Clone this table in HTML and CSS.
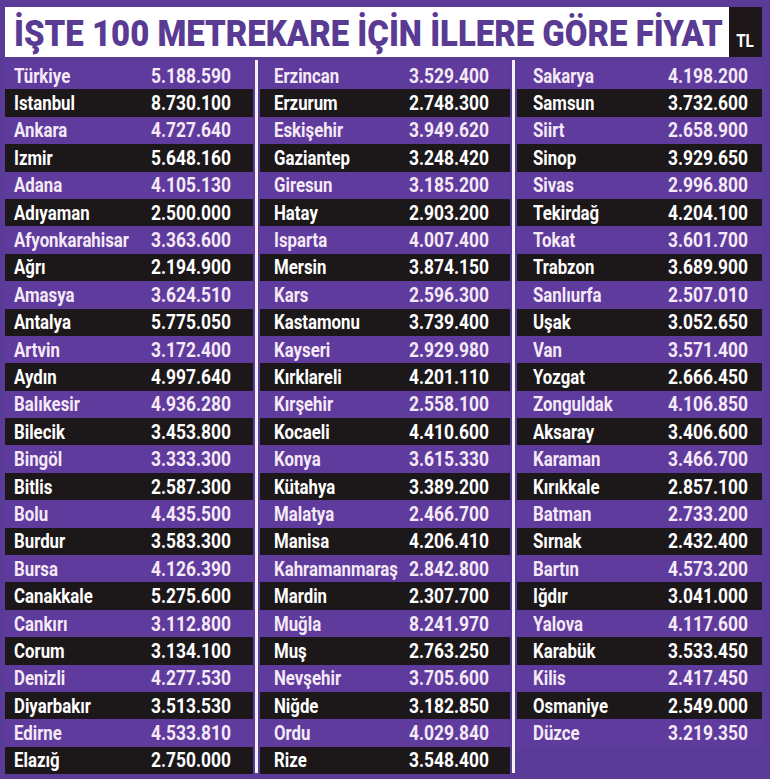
FILE: index.html
```html
<!DOCTYPE html>
<html lang="tr">
<head>
<meta charset="utf-8">
<title>İşte 100 metrekare için illere göre fiyat</title>
<link rel="stylesheet" href="styles.css">
</head>
<body>
<div class="page">
  <div class="header">
    <div class="title"><span class="title-text">İŞTE 100 METREKARE İÇİN İLLERE GÖRE FİYAT</span></div>
    <div class="tl"><span>TL</span></div>
  </div>
  <div class="table">
    <div class="col col1">
      <div class="row"><span class="name">Türkiye</span><span class="num">5.188.590</span></div>
      <div class="row"><span class="name">Istanbul</span><span class="num">8.730.100</span></div>
      <div class="row"><span class="name">Ankara</span><span class="num">4.727.640</span></div>
      <div class="row"><span class="name">Izmir</span><span class="num">5.648.160</span></div>
      <div class="row"><span class="name">Adana</span><span class="num">4.105.130</span></div>
      <div class="row"><span class="name">Adıyaman</span><span class="num">2.500.000</span></div>
      <div class="row"><span class="name">Afyonkarahisar</span><span class="num">3.363.600</span></div>
      <div class="row"><span class="name">Ağrı</span><span class="num">2.194.900</span></div>
      <div class="row"><span class="name">Amasya</span><span class="num">3.624.510</span></div>
      <div class="row"><span class="name">Antalya</span><span class="num">5.775.050</span></div>
      <div class="row"><span class="name">Artvin</span><span class="num">3.172.400</span></div>
      <div class="row"><span class="name">Aydın</span><span class="num">4.997.640</span></div>
      <div class="row"><span class="name">Balıkesir</span><span class="num">4.936.280</span></div>
      <div class="row"><span class="name">Bilecik</span><span class="num">3.453.800</span></div>
      <div class="row"><span class="name">Bingöl</span><span class="num">3.333.300</span></div>
      <div class="row"><span class="name">Bitlis</span><span class="num">2.587.300</span></div>
      <div class="row"><span class="name">Bolu</span><span class="num">4.435.500</span></div>
      <div class="row"><span class="name">Burdur</span><span class="num">3.583.300</span></div>
      <div class="row"><span class="name">Bursa</span><span class="num">4.126.390</span></div>
      <div class="row"><span class="name">Canakkale</span><span class="num">5.275.600</span></div>
      <div class="row"><span class="name">Cankırı</span><span class="num">3.112.800</span></div>
      <div class="row"><span class="name">Corum</span><span class="num">3.134.100</span></div>
      <div class="row"><span class="name">Denizli</span><span class="num">4.277.530</span></div>
      <div class="row"><span class="name">Diyarbakır</span><span class="num">3.513.530</span></div>
      <div class="row"><span class="name">Edirne</span><span class="num">4.533.810</span></div>
      <div class="row"><span class="name">Elazığ</span><span class="num">2.750.000</span></div>
    </div>
    <div class="sep"></div>
    <div class="col col2">
      <div class="row"><span class="name">Erzincan</span><span class="num">3.529.400</span></div>
      <div class="row"><span class="name">Erzurum</span><span class="num">2.748.300</span></div>
      <div class="row"><span class="name">Eskişehir</span><span class="num">3.949.620</span></div>
      <div class="row"><span class="name">Gaziantep</span><span class="num">3.248.420</span></div>
      <div class="row"><span class="name">Giresun</span><span class="num">3.185.200</span></div>
      <div class="row"><span class="name">Hatay</span><span class="num">2.903.200</span></div>
      <div class="row"><span class="name">Isparta</span><span class="num">4.007.400</span></div>
      <div class="row"><span class="name">Mersin</span><span class="num">3.874.150</span></div>
      <div class="row"><span class="name">Kars</span><span class="num">2.596.300</span></div>
      <div class="row"><span class="name">Kastamonu</span><span class="num">3.739.400</span></div>
      <div class="row"><span class="name">Kayseri</span><span class="num">2.929.980</span></div>
      <div class="row"><span class="name">Kırklareli</span><span class="num">4.201.110</span></div>
      <div class="row"><span class="name">Kırşehir</span><span class="num">2.558.100</span></div>
      <div class="row"><span class="name">Kocaeli</span><span class="num">4.410.600</span></div>
      <div class="row"><span class="name">Konya</span><span class="num">3.615.330</span></div>
      <div class="row"><span class="name">Kütahya</span><span class="num">3.389.200</span></div>
      <div class="row"><span class="name">Malatya</span><span class="num">2.466.700</span></div>
      <div class="row"><span class="name">Manisa</span><span class="num">4.206.410</span></div>
      <div class="row"><span class="name">Kahramanmaraş</span><span class="num">2.842.800</span></div>
      <div class="row"><span class="name">Mardin</span><span class="num">2.307.700</span></div>
      <div class="row"><span class="name">Muğla</span><span class="num">8.241.970</span></div>
      <div class="row"><span class="name">Muş</span><span class="num">2.763.250</span></div>
      <div class="row"><span class="name">Nevşehir</span><span class="num">3.705.600</span></div>
      <div class="row"><span class="name">Niğde</span><span class="num">3.182.850</span></div>
      <div class="row"><span class="name">Ordu</span><span class="num">4.029.840</span></div>
      <div class="row"><span class="name">Rize</span><span class="num">3.548.400</span></div>
    </div>
    <div class="sep"></div>
    <div class="col col3">
      <div class="row"><span class="name">Sakarya</span><span class="num">4.198.200</span></div>
      <div class="row"><span class="name">Samsun</span><span class="num">3.732.600</span></div>
      <div class="row"><span class="name">Siirt</span><span class="num">2.658.900</span></div>
      <div class="row"><span class="name">Sinop</span><span class="num">3.929.650</span></div>
      <div class="row"><span class="name">Sivas</span><span class="num">2.996.800</span></div>
      <div class="row"><span class="name">Tekirdağ</span><span class="num">4.204.100</span></div>
      <div class="row"><span class="name">Tokat</span><span class="num">3.601.700</span></div>
      <div class="row"><span class="name">Trabzon</span><span class="num">3.689.900</span></div>
      <div class="row"><span class="name">Sanlıurfa</span><span class="num">2.507.010</span></div>
      <div class="row"><span class="name">Uşak</span><span class="num">3.052.650</span></div>
      <div class="row"><span class="name">Van</span><span class="num">3.571.400</span></div>
      <div class="row"><span class="name">Yozgat</span><span class="num">2.666.450</span></div>
      <div class="row"><span class="name">Zonguldak</span><span class="num">4.106.850</span></div>
      <div class="row"><span class="name">Aksaray</span><span class="num">3.406.600</span></div>
      <div class="row"><span class="name">Karaman</span><span class="num">3.466.700</span></div>
      <div class="row"><span class="name">Kırıkkale</span><span class="num">2.857.100</span></div>
      <div class="row"><span class="name">Batman</span><span class="num">2.733.200</span></div>
      <div class="row"><span class="name">Sırnak</span><span class="num">2.432.400</span></div>
      <div class="row"><span class="name">Bartın</span><span class="num">4.573.200</span></div>
      <div class="row"><span class="name">Iğdır</span><span class="num">3.041.000</span></div>
      <div class="row"><span class="name">Yalova</span><span class="num">4.117.600</span></div>
      <div class="row"><span class="name">Karabük</span><span class="num">3.533.450</span></div>
      <div class="row"><span class="name">Kilis</span><span class="num">2.417.450</span></div>
      <div class="row"><span class="name">Osmaniye</span><span class="num">2.549.000</span></div>
      <div class="row"><span class="name">Düzce</span><span class="num">3.219.350</span></div>
    </div>
  </div>
</div>
</body>
</html>
```
FILE: styles.css
```css
html, body {
  margin: 0;
  padding: 0;
  background: #5b3b98;
}
body {
  width: 770px;
  height: 779px;
  overflow: hidden;
  font-family: Roboto, "Liberation Sans", sans-serif;
}
.page {
  padding: 7px 8px 0 5px;
}
.header {
  display: flex;
  height: 50px;
}
.title {
  flex: 1;
  background: #ffffff;
  display: flex;
  align-items: center;
  overflow: hidden;
  padding-left: 9px;
}
.title-text {
  display: inline-block;
  white-space: nowrap;
  font-weight: 900;
  font-size: 37px;
  color: #5a3b94;
  transform: scaleX(0.89);
  transform-origin: left center;
  margin-top: 2px;
}
.tl {
  width: 33px;
  background: #1d1719;
  display: flex;
  align-items: flex-end;
  justify-content: center;
  padding-bottom: 5px;
  box-sizing: border-box;
}
.tl span {
  display: inline-block;
  color: #ffffff;
  font-weight: 700;
  font-size: 19px;
  transform: scaleX(0.8);
}
.table {
  display: grid;
  grid-template-columns: 248px 3px 250px 3px 245px;
  column-gap: 2px;
  margin-top: 5px;
}
.sep {
  background: #f4f0f6;
  margin-top: -2px;
  margin-bottom: 1px;
}
.col {
  display: flex;
  flex-direction: column;
}
.row {
  height: 27.4px;
  display: flex;
  align-items: center;
  font-weight: 700;
  font-size: 20px;
  white-space: nowrap;
}
.row:nth-child(odd) {
  background: #5e3b9d;
  color: #f6e9f6;
}
.row:nth-child(even) {
  background: #1c1719;
  color: #ffffff;
}
.name {
  display: block;
  flex: 1 1 0;
  min-width: 0;
  transform: scaleX(0.84);
  transform-origin: left center;
}
.num {
  display: block;
  flex: none;
  transform: scaleX(0.87);
  transform-origin: right center;
}
.col1 .row { padding: 0 22px 0 9px; }
.col2 .row { padding: 0 21px 0 14px; }
.col3 .row { padding: 0 14px 0 16px; }
```
